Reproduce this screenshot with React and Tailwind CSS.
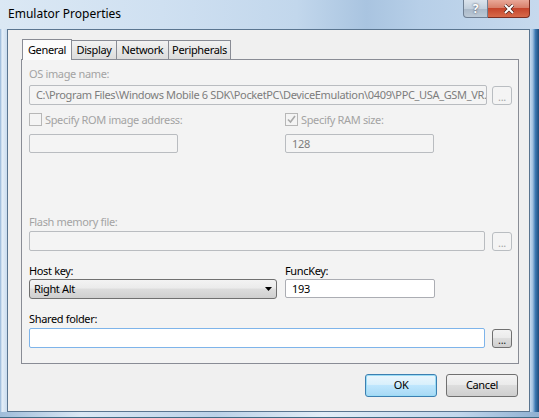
import React from 'react';

function DotsButton({ disabled }) {
    return (
        <div
            className={
                'w-[20px] h-[19px] shrink-0 rounded-[3px] border flex items-center justify-center text-[11px] leading-[11px] pt-[2px] ' +
                (disabled
                    ? 'border-[#b9bdc1] bg-[#f4f4f4] text-[#a6a6a6]'
                    : 'border-[#707070] bg-[linear-gradient(#f3f3f3_0%,#ebebeb_45%,#dddddd_50%,#cfcfcf_100%)] text-[#222]')
            }
        >
            ...
        </div>
    );
}

function Check({ checked }) {
    return (
        <div className="w-[13px] h-[13px] border border-[#b7b7b7] bg-[#f4f4f4] flex items-center justify-center">
            {checked && (
                <svg width="9" height="9" viewBox="0 0 9 9">
                    <path d="M1 4.5 L3.5 7 L8 1" fill="none" stroke="#a9a9a9" strokeWidth="1.6" />
                </svg>
            )}
        </div>
    );
}

export default function App() {
    return (
        <div className="w-[539px] h-[418px] flex flex-col overflow-hidden font-['Noto_Sans','DejaVu_Sans',sans-serif] text-[11px] tracking-[-0.35px] bg-[#c3d8ee]">
            {/* title bar */}
            <div className="h-[29px] flex items-start bg-[linear-gradient(90deg,#dbe8f4_0%,#cfe0f1_30%,#c2d7ec_55%,#a9c4e0_68%,#b7cfe8_78%,#c6d9ed_100%)]">
                <div className="pl-[8px] pt-[5px] text-[12px] tracking-normal text-black">Emulator Properties</div>
                <div className="ml-auto mr-[9px] flex">
                    <div className="w-[25px] h-[18px] rounded-bl-[4px] border border-[#6f7f93] border-t-0 bg-[linear-gradient(#dbe3ec_0%,#c2cfdc_50%,#a9b8c8_51%,#bcc9d6_100%)] flex items-center justify-center text-white font-bold text-[12px] [text-shadow:0_0_2px_#334]">
                        ?
                    </div>
                    <div className="w-[42px] h-[18px] rounded-br-[4px] border border-[#7a2e22] border-t-0 border-l-0 bg-[linear-gradient(#e9a898_0%,#d8806b_45%,#c5452c_50%,#d76a4a_100%)] flex items-center justify-center">
                        <svg width="12" height="10" viewBox="0 0 12 10">
                            <path d="M2 1 L10 9 M10 1 L2 9" stroke="#3b1a14" strokeWidth="3.2" />
                            <path d="M2 1 L10 9 M10 1 L2 9" stroke="#ffffff" strokeWidth="2" />
                        </svg>
                    </div>
                </div>
            </div>

            <div className="flex flex-1">
                {/* left frame */}
                <div className="w-[7px] bg-[linear-gradient(90deg,#8fb2d6_0%,#e4eef8_30%,#c9dcef_100%)]" />

                {/* client area */}
                <div className="w-[523px] border border-[#5a7590] bg-[#f0f0f0] flex flex-col">
                    <div className="ml-[13px] mr-[10px] mt-[8px] flex flex-col">
                        {/* tabs */}
                        <div className="flex items-end h-[21px] pl-[1px]">
                            <div className="h-[21px] w-[50px] border border-b-0 border-[#898c95] bg-[#fcfcfc] flex items-center justify-center text-black relative top-[1px] z-10">
                                General
                            </div>
                            <div className="h-[19px] w-[45px] border border-l-0 border-b-0 border-[#898c95] bg-[linear-gradient(#f2f2f2,#dcdcdc)] flex items-center justify-center text-black">
                                Display
                            </div>
                            <div className="h-[19px] w-[52px] border border-l-0 border-b-0 border-[#898c95] bg-[linear-gradient(#f2f2f2,#dcdcdc)] flex items-center justify-center text-black">
                                Network
                            </div>
                            <div className="h-[19px] w-[62px] border border-l-0 border-b-0 border-[#898c95] bg-[linear-gradient(#f2f2f2,#dcdcdc)] flex items-center justify-center text-black">
                                Peripherals
                            </div>
                        </div>

                        {/* panel */}
                        <div className="h-[305px] border border-[#898c95] bg-[#f3f3f3] pl-[7px] flex flex-col">
                            <div className="mt-[6px] h-[15px] leading-[15px] text-[#a3a3a3]">OS image name:</div>
                            <div className="mt-[4px] flex items-center gap-[5px]">
                                <div className="w-[458px] h-[20px] rounded-[2px] border border-[#b9bcc0] bg-[#f4f4f4] pl-[6px] leading-[18px] text-[#7d7d7d] whitespace-nowrap overflow-hidden">
                                    C:\Program Files\Windows Mobile 6 SDK\PocketPC\DeviceEmulation\0409\PPC_USA_GSM_VR.
                                </div>
                                <DotsButton disabled />
                            </div>

                            <div className="mt-[7px] flex">
                                <div className="w-[256px] flex items-center gap-[3px]">
                                    <Check />
                                    <span className="text-[#a3a3a3] leading-[15px]">Specify ROM image address:</span>
                                </div>
                                <div className="flex items-center gap-[3px]">
                                    <Check checked />
                                    <span className="text-[#a3a3a3] leading-[15px]">Specify RAM size:</span>
                                </div>
                            </div>

                            <div className="mt-[7px] flex">
                                <div className="w-[256px]">
                                    <div className="w-[149px] h-[19px] rounded-[2px] border border-[#b9bcc0] bg-[#f4f4f4]" />
                                </div>
                                <div className="w-[149px] h-[19px] rounded-[2px] border border-[#b9bcc0] bg-[#f4f4f4] pl-[6px] leading-[17px] text-[#7d7d7d]">
                                    128
                                </div>
                            </div>

                            <div className="mt-[61px] h-[15px] leading-[15px] text-[#a3a3a3]">Flash memory file:</div>
                            <div className="mt-[2px] flex items-center gap-[7px]">
                                <div className="w-[456px] h-[20px] rounded-[2px] border border-[#b9bcc0] bg-[#f4f4f4]" />
                                <DotsButton disabled />
                            </div>

                            <div className="mt-[12px] flex">
                                <div className="w-[256px] h-[15px] leading-[15px] text-black">Host key:</div>
                                <div className="h-[15px] leading-[15px] text-black">FuncKey:</div>
                            </div>
                            <div className="mt-[1px] flex">
                                <div className="w-[256px]">
                                    <div className="w-[248px] h-[20px] rounded-[3px] border border-[#707070] bg-[linear-gradient(#f3f3f3_0%,#ebebeb_45%,#dddddd_50%,#cfcfcf_100%)] flex items-center pl-[4px] pr-[4px] text-black">
                                        <span>Right Alt</span>
                                        <svg className="ml-auto" width="7" height="4" viewBox="0 0 7 4">
                                            <path d="M0 0 L7 0 L3.5 4 Z" fill="#000" />
                                        </svg>
                                    </div>
                                </div>
                                <div className="w-[150px] h-[19px] rounded-[2px] border border-[#abadb3] bg-white pl-[6px] leading-[17px] text-black">
                                    193
                                </div>
                            </div>

                            <div className="mt-[12px] h-[15px] leading-[15px] text-black">Shared folder:</div>
                            <div className="mt-[2px] flex items-center gap-[7px]">
                                <div className="w-[456px] h-[20px] rounded-[2px] border border-[#7eb4ea] bg-white" />
                                <DotsButton />
                            </div>
                        </div>

                        {/* dialog buttons */}
                        <div className="mt-[10px] flex justify-end gap-[9px] pr-[1px]">
                            <div className="w-[72px] h-[23px] rounded-[3px] border border-[#3c7fb1] bg-[linear-gradient(#eaf6fd_0%,#d9f0fc_45%,#bee6fd_50%,#a7d9f5_100%)] shadow-[inset_0_0_0_1px_#9bdcf5] flex items-center justify-center text-black">
                                OK
                            </div>
                            <div className="w-[72px] h-[23px] rounded-[3px] border border-[#707070] bg-[linear-gradient(#f3f3f3_0%,#ebebeb_45%,#dddddd_50%,#cfcfcf_100%)] flex items-center justify-center text-black">
                                Cancel
                            </div>
                        </div>
                    </div>
                </div>

                {/* right frame */}
                <div className="w-[9px] bg-[linear-gradient(90deg,#c6daee_0%,#9fc0e0_30%,#3c78b2_60%,#1d4a78_100%)]" />
            </div>

            {/* bottom frame */}
            <div className="h-[6px] bg-[linear-gradient(90deg,#9fbcd9_0%,#dbe8f5_15%,#bcd2e8_40%,#e2edf7_60%,#c2d7ec_85%,#8fb0d2_100%)] border-b border-[#3f6a84]" />
        </div>
    );
}
